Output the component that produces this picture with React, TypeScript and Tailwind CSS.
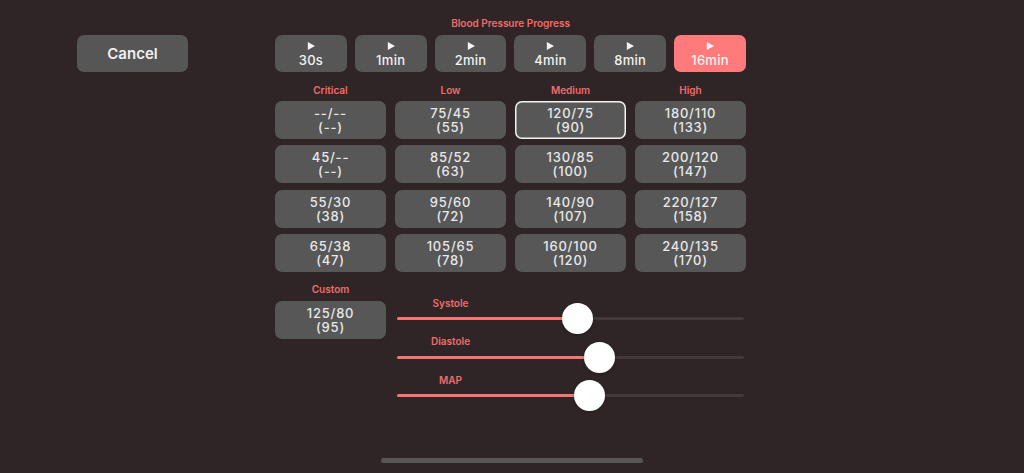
import React from "react";

const times = ["30s", "1min", "2min", "4min", "8min", "16min"];

const columns: { title: string; items: [string, string][] }[] = [
  {
    title: "Critical",
    items: [
      ["--/--", "(--)"],
      ["45/--", "(--)"],
      ["55/30", "(38)"],
      ["65/38", "(47)"],
    ],
  },
  {
    title: "Low",
    items: [
      ["75/45", "(55)"],
      ["85/52", "(63)"],
      ["95/60", "(72)"],
      ["105/65", "(78)"],
    ],
  },
  {
    title: "Medium",
    items: [
      ["120/75", "(90)"],
      ["130/85", "(100)"],
      ["140/90", "(107)"],
      ["160/100", "(120)"],
    ],
  },
  {
    title: "High",
    items: [
      ["180/110", "(133)"],
      ["200/120", "(147)"],
      ["220/127", "(158)"],
      ["240/135", "(170)"],
    ],
  },
];

const sliders = [
  { label: "Systole", value: 180 },
  { label: "Diastole", value: 202 },
  { label: "MAP", value: 192 },
];

function Card({ top, bottom, selected }: { top: string; bottom: string; selected?: boolean }) {
  return (
    <button
      className={
        "h-[38px] w-[111px] rounded-[7px] bg-[#575757] flex flex-col items-center justify-center text-[13px] leading-[14px] font-medium text-[#e8e8e8] tracking-[0.8px] " +
        (selected ? "ring-[1.5px] ring-inset ring-[#f2f2f2]" : "")
      }
    >
      <span>{top}</span>
      <span>{bottom}</span>
    </button>
  );
}

function Slider({ label, value }: { label: string; value: number }) {
  return (
    <div className="flex flex-col">
      <div className="w-[111px] text-center text-[10px] leading-[14px] font-semibold text-[#f06c6c] ml-[-2px]">
        {label}
      </div>
      <div className="relative h-[24.5px] w-[347px]">
        <div className="absolute left-0 right-0 top-[7.5px] h-[3px] rounded-full bg-[#44393a]" />
        <div
          className="absolute left-0 top-[7.5px] h-[3px] rounded-full bg-[#f47575]"
          style={{ width: value }}
        />
        <div
          className="absolute top-[-6.5px] h-[31px] w-[31px] rounded-full bg-white shadow-[0_1px_3px_rgba(0,0,0,0.3)]"
          style={{ left: value - 15.5 }}
        />
      </div>
    </div>
  );
}

export default function App() {
  return (
    <div
      className="relative w-[1024px] h-[473px] bg-[#302526] overflow-hidden text-white"
      style={{ fontFamily: "Inter, 'Liberation Sans', sans-serif" }}
    >
      <div className="flex pl-[77px] pt-[16px]">
        <div className="pt-[19px]">
          <button className="h-[37px] w-[111px] rounded-[7px] bg-[#565656] text-[15px] font-semibold text-[#f0f0f0] pt-[1px]">
            Cancel
          </button>
        </div>

        <div className="ml-[87px] w-[471px] flex flex-col">
          <div className="text-center text-[10px] leading-[14px] font-semibold text-[#f06c6c]">
            Blood Pressure Progress
          </div>
          <div className="mt-[5px] flex gap-[8px]">
            {times.map((t, i) => {
              const active = i === times.length - 1;
              return (
                <button
                  key={t}
                  className={
                    "h-[37px] w-[72px] rounded-[7px] flex flex-col items-center pt-[7px] text-[13px] font-medium text-[#f2f2f2] tracking-[0.3px] " +
                    (active ? "bg-[#ff7b7b]" : "bg-[#565656]")
                  }
                >
                  <svg width="8" height="8" viewBox="0 0 10 10">
                    <path d="M1 0 L10 5 L1 10 Z" fill="#f4f4f4" />
                  </svg>
                  <span className="mt-[2.5px] leading-[15px]">{t}</span>
                </button>
              );
            })}
          </div>

          <div className="mt-[11px] flex gap-[9px]">
            {columns.map((col, ci) => (
              <div key={col.title} className="flex flex-col w-[111px]">
                <div className="text-center text-[10px] leading-[14px] font-semibold text-[#f06c6c]">
                  {col.title}
                </div>
                <div className="mt-[4px] flex flex-col gap-[6.3px]">
                  {col.items.map(([a, b], ri) => (
                    <Card key={a} top={a} bottom={b} selected={ci === 2 && ri === 0} />
                  ))}
                </div>
              </div>
            ))}
          </div>

          <div className="mt-[10px] flex gap-[11px]">
            <div className="flex flex-col w-[111px]">
              <div className="text-center text-[10px] leading-[14px] font-semibold text-[#f06c6c]">
                Custom
              </div>
              <div className="mt-[5px]">
                <Card top="125/80" bottom="(95)" />
              </div>
            </div>
            <div className="flex flex-col pt-[14px]">
              {sliders.map((s) => (
                <Slider key={s.label} label={s.label} value={s.value} />
              ))}
            </div>
          </div>
        </div>
      </div>

      <div className="absolute left-[381px] top-[458px] h-[5px] w-[262px] rounded-full bg-[#565656]" />
    </div>
  );
}
